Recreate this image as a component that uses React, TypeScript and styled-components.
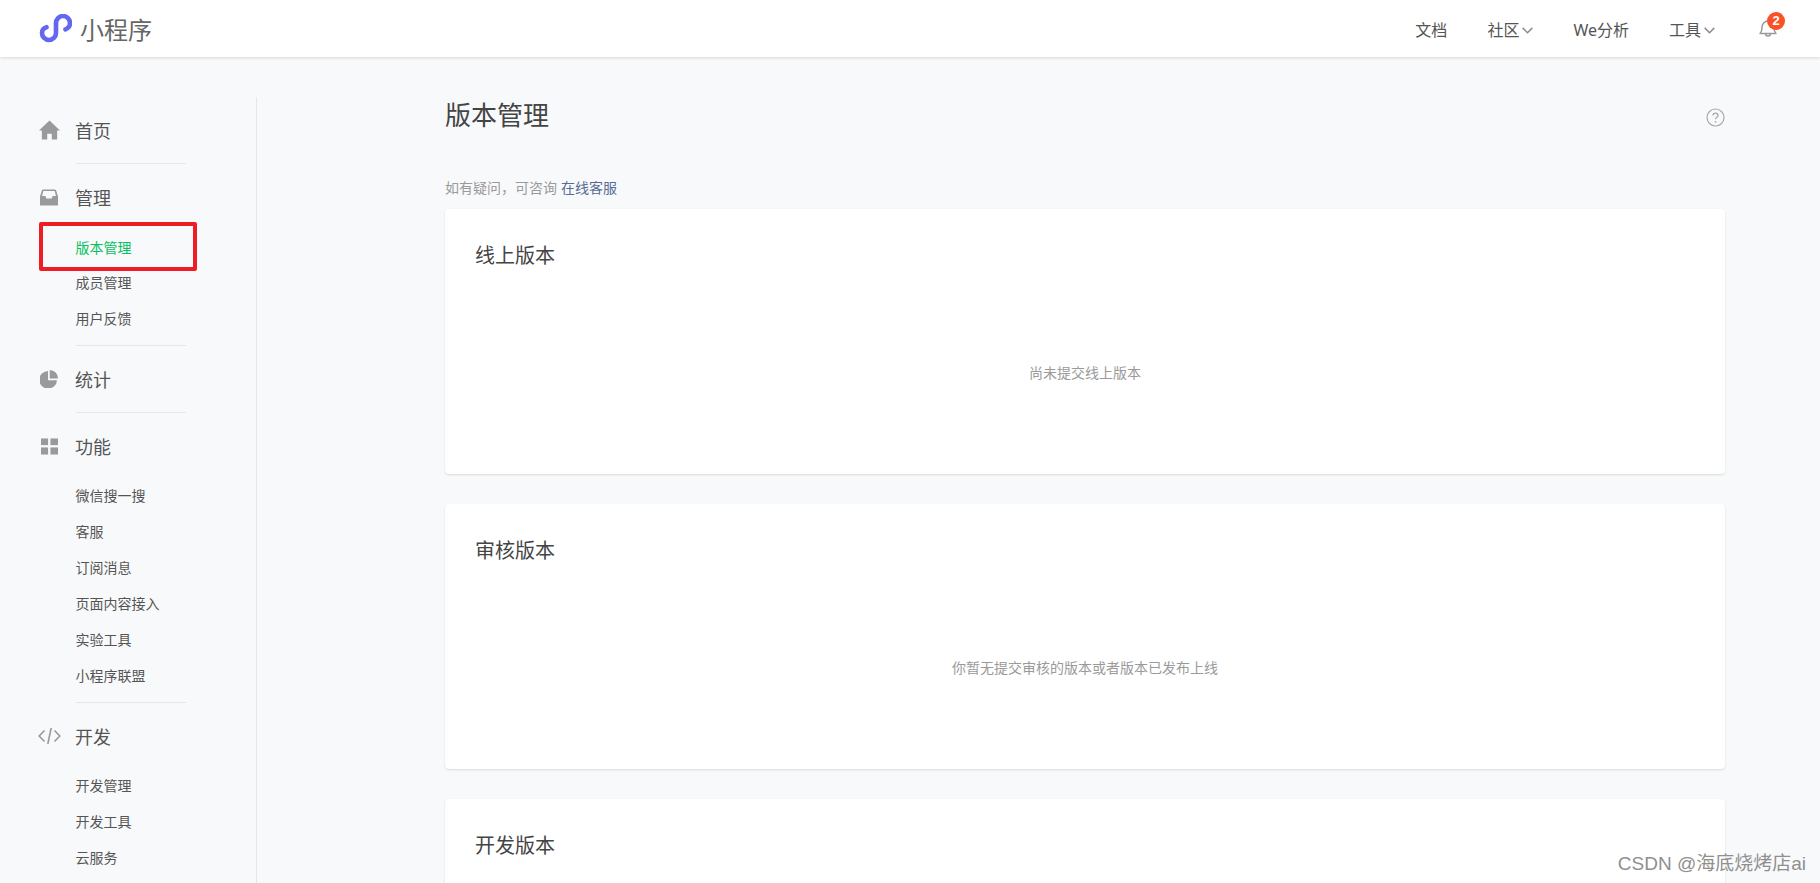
import React from 'react';
import styled, { createGlobalStyle } from 'styled-components';

const GlobalStyle = createGlobalStyle`
  html, body {
    margin: 0;
    padding: 0;
    height: 100%;
    overflow: hidden;
    background: #f8f9fb;
  }
  body {
    font-family: "Noto Sans CJK SC", "Noto Sans", sans-serif;
    color: #353535;
  }
`;

const Page = styled.div`
  position: relative;
  height: 883px;
  overflow: hidden;
`;

const Header = styled.header`
  height: 57px;
  background: #fff;
  box-shadow: 0 1px 3px rgba(0, 0, 0, 0.14);
  display: flex;
  align-items: center;
  justify-content: space-between;
  padding: 0 42px 0 39px;
  position: relative;
`;

const Brand = styled.div`
  display: flex;
  align-items: center;
  gap: 8px;
  font-size: 24px;
  color: #666;
`;

const TopNav = styled.nav`
  display: flex;
  align-items: center;
  gap: 40px;
`;

const TopLink = styled.span`
  display: flex;
  align-items: center;
  gap: 3px;
  font-size: 16px;
  font-family: "Noto Sans", "Noto Sans CJK SC", sans-serif;
  color: #555;
`;

const BellBox = styled.span`
  position: relative;
  display: block;
  width: 20px;
  height: 20px;
  margin-left: 3px;
  margin-top: -2px;
`;

const Badge = styled.span`
  position: absolute;
  top: -6px;
  left: 9px;
  width: 18px;
  height: 18px;
  border-radius: 50%;
  background: #fa5127;
  color: #fff;
  font-size: 13px;
  font-family: "Liberation Sans", sans-serif;
  font-weight: 700;
  line-height: 18px;
  text-align: center;
`;

const Body = styled.div`
  display: flex;
  padding-top: 40px;
`;

const Sidebar = styled.aside`
  width: 257px;
  height: 786px;
  flex: none;
  box-sizing: border-box;
  border-right: 1px solid #e7e7eb;
  padding-left: 39px;
`;

const Group = styled.section`
  width: 147px;
  padding: 13px 0;
`;

const Divider = styled.hr`
  width: 110px;
  height: 1px;
  margin: 0 0 0 37px;
  border: 0;
  background: #e7e7eb;
`;

const GroupRow = styled.div`
  display: flex;
  align-items: center;
  height: 40px;
  font-size: 18px;
  color: #555;
`;

const IconSlot = styled.span`
  width: 36px;
  flex: none;
  display: flex;
  align-items: center;
  color: #9a9a9a;
`;

const SubList = styled.ul<{ $gap: number }>`
  list-style: none;
  margin: ${p => p.$gap}px 0 -5px 36.5px;
  padding: 0;
`;

const SubItem = styled.li<{ $active?: boolean }>`
  height: 35.9px;
  line-height: 35.9px;
  font-size: 14px;
  white-space: nowrap;
  color: ${p => (p.$active ? '#07c160' : '#555')};
`;

const Main = styled.main`
  width: 1280px;
  margin-left: 188px;
  flex: none;
`;

const TitleRow = styled.div`
  display: flex;
  justify-content: space-between;
  height: 36px;
`;

const PageTitle = styled.h1`
  margin: 0;
  font-size: 26px;
  font-weight: 400;
  line-height: 34px;
  color: #444;
`;

const HelpIcon = styled.svg`
  width: 19px;
  height: 19px;
  margin-top: 11px;
`;

const Hint = styled.p`
  margin: 44px 0 12px;
  height: 20px;
  font-size: 14px;
  line-height: 20px;
  color: #9a9a9a;
`;

const HintLink = styled.a`
  color: #576b95;
  margin-left: 4px;
`;

const Card = styled.section`
  height: 265px;
  box-sizing: border-box;
  margin-bottom: 30px;
  padding: 30px 30px 0;
  background: #fff;
  border-radius: 4px;
  box-shadow: 0 1px 2px rgba(150, 150, 150, 0.3);
`;

const CardTitle = styled.h2`
  margin: 0;
  font-size: 20px;
  font-weight: 400;
  line-height: 32px;
  color: #444;
`;

const EmptyText = styled.p`
  margin: 91px 0 0;
  font-size: 14px;
  line-height: 20px;
  color: #9a9a9a;
  text-align: center;
`;

const RedFrame = styled.div`
  position: absolute;
  left: 39px;
  top: 222px;
  width: 158px;
  height: 49px;
  box-sizing: border-box;
  border: 4px solid #ee1c25;
  border-radius: 2px;
`;

const Watermark = styled.div`
  position: absolute;
  right: 14px;
  bottom: 6px;
  font-size: 19px;
  line-height: 26px;
  color: #8f8f8f;
  text-shadow: 0 0 1px #fff;
  font-family: "Liberation Sans", "Noto Sans CJK SC", sans-serif;
`;

const ChevronSvg = styled.svg`
  margin-top: 3px;
`;

const SideSvg = styled.svg<{ $left?: number }>`
  margin-left: ${p => p.$left ?? 0}px;
`;

const Logo = () => (
  <svg width="33" height="30" viewBox="39 12 33 30" fill="none">
    <path
      d="M46.5 25.2C43.8 26 42 28.3 42 31a7 7 0 0 0 14 0V21a7 7 0 0 1 14 0c0 2.9-1.9 5.3-4.5 6.3"
      stroke="#6467f0"
      strokeWidth="4.6"
      strokeLinecap="round"
    />
  </svg>
);

const Chevron = () => (
  <ChevronSvg width="11" height="7" viewBox="0 0 11 7" fill="none">
    <path d="M.7.9l4.8 4.8L10.3.9" stroke="#8c8c8c" strokeWidth="1.5" />
  </ChevronSvg>
);

const HomeIcon = () => (
  <SideSvg width="21" height="20" viewBox="0 0 22 20" fill="currentColor">
    <path d="M11 0L0 10.4h3V20h5.6v-6h4.8v6H19v-9.6h3z" />
  </SideSvg>
);

const InboxIcon = () => (
  <SideSvg $left={1} width="18" height="17" viewBox="0 0 20 18" fill="currentColor">
    <path
      d="M3.6 0h12.8c.7 0 1.2.4 1.5 1L20 8v9c0 .6-.4 1-1 1H1c-.6 0-1-.4-1-1V8l2.1-7c.3-.6.8-1 1.5-1zM3.7 1.8L2.3 7.2H6l1 2.8h6l1-2.8h3.7l-1.4-5.4z"
      fillRule="evenodd"
    />
  </SideSvg>
);

const PieIcon = () => (
  <SideSvg $left={1} width="18" height="18" viewBox="0 0 19 19" fill="currentColor">
    <path d="M8.5 1v9.7h9.4A9.3 9.3 0 1 1 8.5 1z" />
    <path d="M10.3 0a8.8 8.8 0 0 1 8.7 8.9h-8.7z" />
  </SideSvg>
);

const GridIcon = () => (
  <SideSvg $left={2} width="17" height="17" viewBox="0 0 18 17" fill="currentColor">
    <rect width="7.5" height="7" />
    <rect x="10" width="8" height="7" />
    <rect y="9.5" width="7.5" height="7.5" />
    <rect x="10" y="9.5" width="8" height="7.5" />
  </SideSvg>
);

const CodeIcon = () => (
  <SideSvg $left={-1} width="23" height="18" viewBox="0 0 23 18" fill="none" stroke="currentColor" strokeWidth="1.6">
    <path d="M6.5 3.5L1.2 9l5.3 5.5M16.5 3.5L21.8 9l-5.3 5.5M13.2 1L9.8 17" />
  </SideSvg>
);

const BellIcon = () => (
  <svg width="20" height="20" viewBox="0 0 20 20" fill="none" stroke="#9a9a9a" strokeWidth="1.5">
    <path d="M2 15.5c1.5-1.5 2-3 2-6 0-3.5 2.500-6.500 6-6.500s6 3 6 6.500c0 3 .5 4.500 2 6z" strokeLinejoin="round" />
    <path d="M7.5 15.8c0 2.800 5 2.800 5 0" />
  </svg>
);

const groups = [
  { title: '首页', icon: <HomeIcon />, subs: [], gap: 0 },
  { title: '管理', icon: <InboxIcon />, subs: ['版本管理', '成员管理', '用户反馈'], gap: 12.5 },
  { title: '统计', icon: <PieIcon />, subs: [], gap: 0 },
  { title: '功能', icon: <GridIcon />, subs: ['微信搜一搜', '客服', '订阅消息', '页面内容接入', '实验工具', '小程序联盟'], gap: 12 },
  { title: '开发', icon: <CodeIcon />, subs: ['开发管理', '开发工具', '云服务'], gap: 12.5 },
];

const cards = [
  { title: '线上版本', empty: '尚未提交线上版本' },
  { title: '审核版本', empty: '你暂无提交审核的版本或者版本已发布上线' },
  { title: '开发版本', empty: '' },
];

export default function App() {
  return (
    <Page>
      <GlobalStyle />
      <Header>
        <Brand>
          <Logo />
          小程序
        </Brand>
        <TopNav>
          <TopLink>文档</TopLink>
          <TopLink>社区<Chevron /></TopLink>
          <TopLink>We分析</TopLink>
          <TopLink>工具<Chevron /></TopLink>
          <BellBox>
            <BellIcon />
            <Badge>2</Badge>
          </BellBox>
        </TopNav>
      </Header>
      <Body>
        <Sidebar>
          {groups.map((g, i) => (
            <React.Fragment key={g.title}>
              {i > 0 && <Divider />}
              <Group>
                <GroupRow>
                  <IconSlot>{g.icon}</IconSlot>
                  {g.title}
                </GroupRow>
                {g.subs.length > 0 && (
                  <SubList $gap={g.gap}>
                    {g.subs.map(s => (
                      <SubItem key={s} $active={s === '版本管理'}>{s}</SubItem>
                    ))}
                  </SubList>
                )}
              </Group>
            </React.Fragment>
          ))}
          <Divider />
        </Sidebar>
        <Main>
          <TitleRow>
            <PageTitle>版本管理</PageTitle>
            <HelpIcon viewBox="0 0 19 19" fill="none">
              <circle cx="9.5" cy="9.5" r="8.5" stroke="#a8a8a8" strokeWidth="1.2" />
              <path d="M7 7.5c0-3.2 5-3.2 5 0 0 1.800-2.500 1.900-2.500 3.800" stroke="#a8a8a8" strokeWidth="1.3" />
              <circle cx="9.5" cy="13.8" r=".9" fill="#a8a8a8" />
            </HelpIcon>
          </TitleRow>
          <Hint>
            如有疑问，可咨询<HintLink>在线客服</HintLink>
          </Hint>
          {cards.map(c => (
            <Card key={c.title}>
              <CardTitle>{c.title}</CardTitle>
              <EmptyText>{c.empty}</EmptyText>
            </Card>
          ))}
        </Main>
      </Body>
      <RedFrame />
      <Watermark>CSDN @海底烧烤店ai</Watermark>
    </Page>
  );
}
